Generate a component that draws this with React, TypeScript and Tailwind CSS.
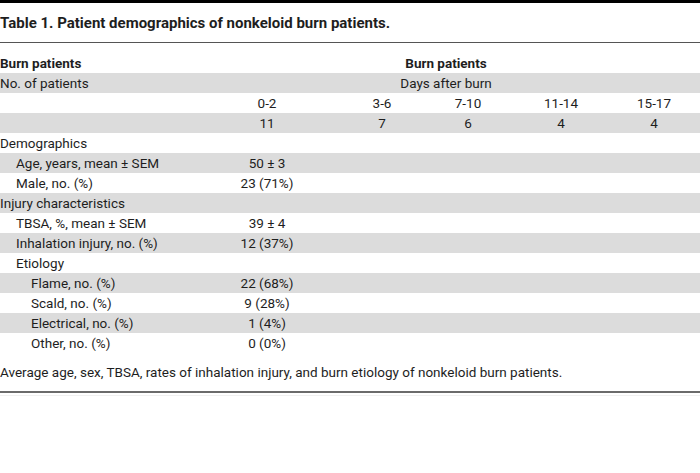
const rows: { label: string; indent: number; value?: string }[] = [
  { label: 'Demographics', indent: 0 },
  { label: 'Age, years, mean ± SEM', indent: 1, value: '50 ± 3' },
  { label: 'Male, no. (%)', indent: 1, value: '23 (71%)' },
  { label: 'Injury characteristics', indent: 0 },
  { label: 'TBSA, %, mean ± SEM', indent: 1, value: '39 ± 4' },
  { label: 'Inhalation injury, no. (%)', indent: 1, value: '12 (37%)' },
  { label: 'Etiology', indent: 1 },
  { label: 'Flame, no. (%)', indent: 2, value: '22 (68%)' },
  { label: 'Scald, no. (%)', indent: 2, value: '9 (28%)' },
  { label: 'Electrical, no. (%)', indent: 2, value: '1 (4%)' },
  { label: 'Other, no. (%)', indent: 2, value: '0 (0%)' },
]

const days = ['0-2', '3-6', '7-10', '11-14', '15-17']
const counts = ['11', '7', '6', '4', '4']

const indentClass = ['pl-0', 'pl-4', 'pl-[31px]']

export default function App() {
  return (
    <div
      className="w-[700px] h-[473px] bg-white text-[#1e1e1e] text-[13.5px]"
      style={{ fontFamily: 'Roboto, "Liberation Sans", Arial, sans-serif' }}
    >
      {/* top rule */}
      <div className="h-[3px] bg-black" />

      {/* title */}
      <div className="h-[40px] flex items-center border-b border-[#555]">
        <h1 className="font-bold text-[15px] leading-5">
          Table 1. Patient demographics of nonkeloid burn patients.
        </h1>
      </div>

      <table className="mt-[10px] w-[700px] table-fixed border-collapse leading-5">
        <colgroup>
          <col className="w-[192px]" />
          <col className="w-[150px]" />
          <col className="w-[80px]" />
          <col className="w-[92px]" />
          <col className="w-[94px]" />
          <col className="w-[92px]" />
        </colgroup>
        <thead>
          <tr className="h-5">
            <th className="p-0 text-left font-bold whitespace-nowrap">Burn patients</th>
            <th colSpan={5} className="p-0 text-center font-bold">Burn patients</th>
          </tr>
        </thead>
        <tbody>
          <tr className="h-5 bg-[#dcdcdc]">
            <td className="p-0 whitespace-nowrap">No. of patients</td>
            <td colSpan={5} className="p-0 text-center">Days after burn</td>
          </tr>
          <tr className="h-5">
            <td className="p-0" />
            {days.map((d) => (
              <td key={d} className="p-0 text-center">{d}</td>
            ))}
          </tr>
          <tr className="h-5 bg-[#dcdcdc]">
            <td className="p-0" />
            {counts.map((c, i) => (
              <td key={i} className="p-0 text-center">{c}</td>
            ))}
          </tr>
          {rows.map((r, i) => (
            <tr key={r.label} className={i % 2 === 1 ? 'h-5 bg-[#dcdcdc]' : 'h-5'}>
              <td className={`p-0 whitespace-nowrap ${indentClass[r.indent]}`}>{r.label}</td>
              <td className="p-0 text-center">{r.value ?? ''}</td>
              <td className="p-0" />
              <td className="p-0" />
              <td className="p-0" />
              <td className="p-0" />
            </tr>
          ))}
        </tbody>
      </table>

      {/* footnote */}
      <p className="mt-[9px] leading-5">
        Average age, sex, TBSA, rates of inhalation injury, and burn etiology of nonkeloid burn patients.
      </p>
      <div className="mt-[9px] h-[2px] bg-[#6b6b6b]" />
      <div className="mt-[2px] h-px bg-[#f0f0f0]" />
    </div>
  )
}
